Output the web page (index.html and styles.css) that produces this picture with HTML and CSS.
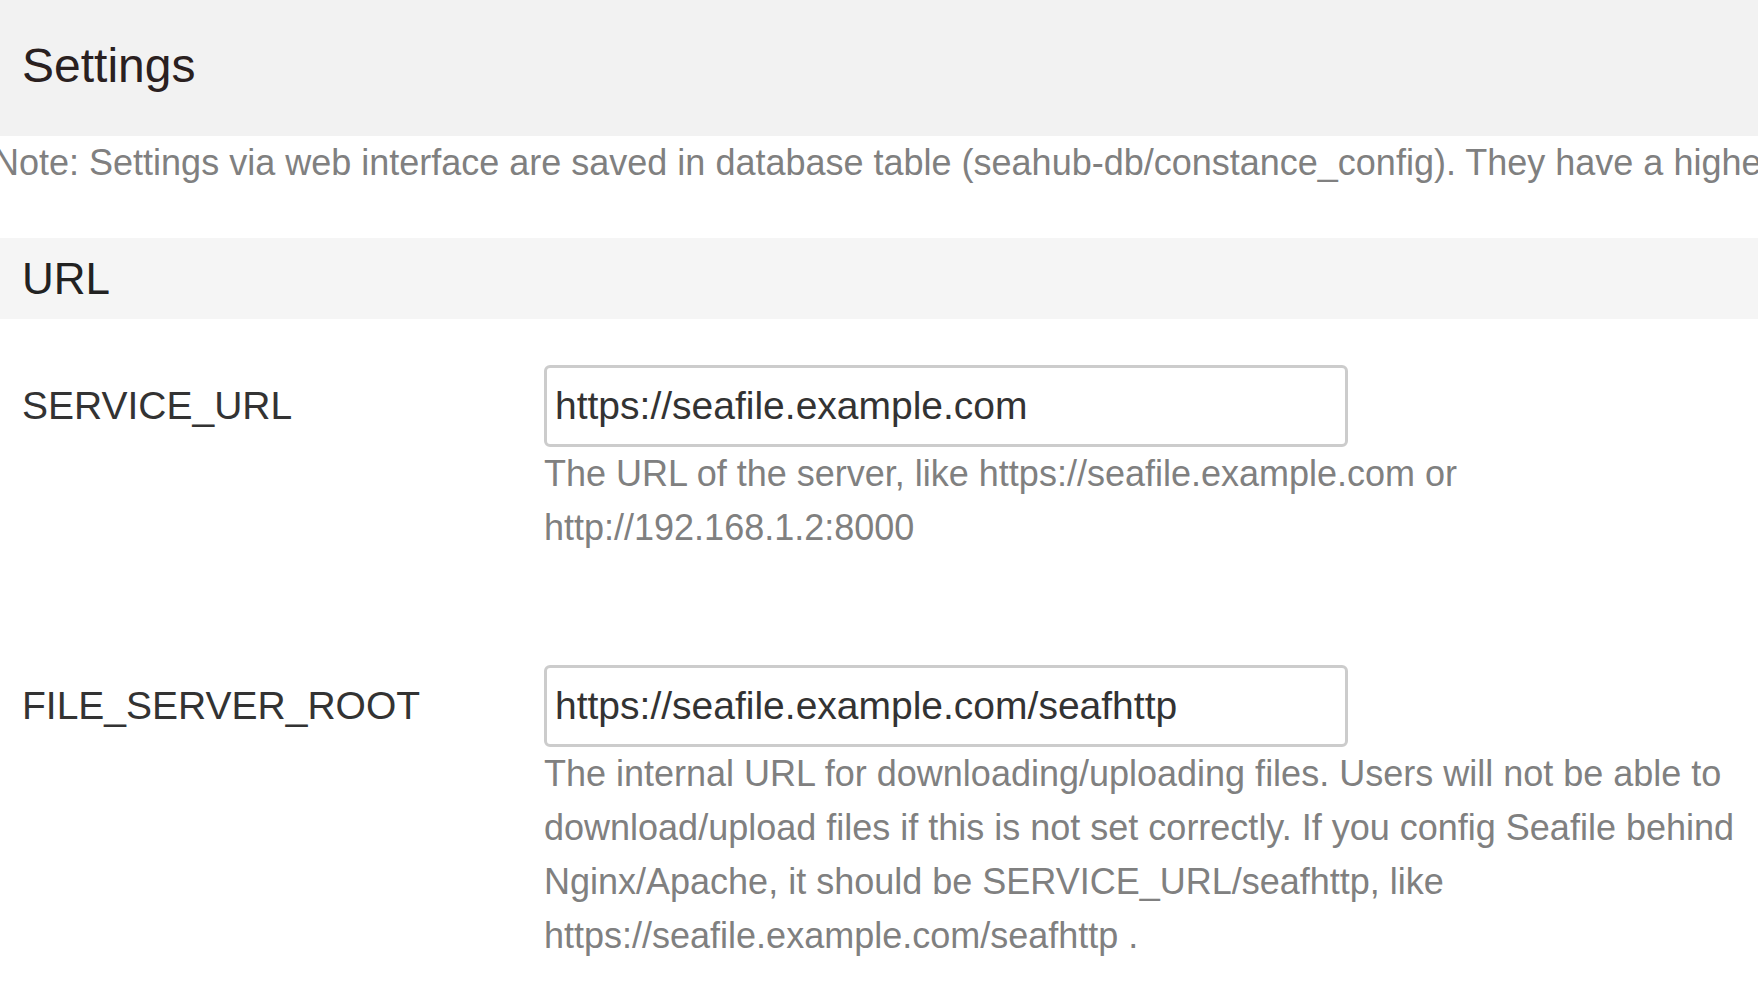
FILE: index.html
```html
<!DOCTYPE html>
<html lang="en">
<head>
<meta charset="utf-8">
<title>Settings</title>
<link rel="stylesheet" href="styles.css">
</head>
<body>
<div class="page">
  <header class="page-head">
    <h2 class="page-title">Settings</h2>
  </header>
  <p class="note">Note: Settings via web interface are saved in database table (seahub-db/constance_config). They have a higher priority over the settings in config files.</p>
  <section class="group">
    <h3 class="group-title">URL</h3>
    <div class="rows">
      <div class="row">
        <div class="label">SERVICE_URL</div>
        <div class="field">
          <input class="text-input" type="text" value="https://seafile.example.com">
          <p class="help">The URL of the server, like https://seafile.example.com or http://192.168.1.2:8000</p>
        </div>
      </div>
      <div class="row">
        <div class="label">FILE_SERVER_ROOT</div>
        <div class="field">
          <input class="text-input" type="text" value="https://seafile.example.com/seafhttp">
          <p class="help">The internal URL for downloading/uploading files. Users will not be able to download/upload files if this is not set correctly. If you config Seafile behind Nginx/Apache, it should be SERVICE_URL/seafhttp, like https://seafile.example.com/seafhttp .</p>
        </div>
      </div>
    </div>
  </section>
</div>
</body>
</html>
```

FILE: styles.css
```css
html, body {
  margin: 0;
  padding: 0;
  background: #ffffff;
  overflow: hidden;
}

body {
  font-family: "Liberation Sans", Arial, Helvetica, sans-serif;
  color: #333333;
}

.page {
  width: 1758px;
  height: 1000px;
  overflow: hidden;
}

.page-head {
  background: #f2f2f2;
  padding: 39px 22px 44px;
}

.page-title {
  margin: 0;
  font-size: 48px;
  line-height: 53px;
  font-weight: normal;
  color: #2a2020;
}

.note {
  margin: 0 0 48px -7px;
  font-size: 36px;
  line-height: 54px;
  color: #808080;
  white-space: nowrap;
}

.group-title {
  margin: 0;
  background: #f5f5f5;
  padding: 16px 22px 15px;
  font-size: 44px;
  line-height: 50px;
  font-weight: normal;
  color: #222222;
}

.rows {
  display: flex;
  flex-direction: column;
  gap: 64px;
  padding: 0 0 0 22px;
}

.row {
  display: grid;
  grid-template-columns: 522px 1200px;
  padding-top: 46px;
}

.label {
  font-size: 39px;
  line-height: 82px;
  color: #333333;
}

.field {
  display: flex;
  flex-direction: column;
  align-items: flex-start;
}

.text-input {
  box-sizing: border-box;
  width: 804px;
  height: 82px;
  margin: 0;
  padding: 0 8px;
  border: 3px solid #cccccc;
  border-radius: 6px;
  background: #ffffff;
  font-family: "Liberation Sans", Arial, Helvetica, sans-serif;
  font-size: 39px;
  color: #333333;
  outline: none;
}

.help {
  margin: 0;
  font-size: 36px;
  line-height: 54px;
  color: #808080;
}
```
